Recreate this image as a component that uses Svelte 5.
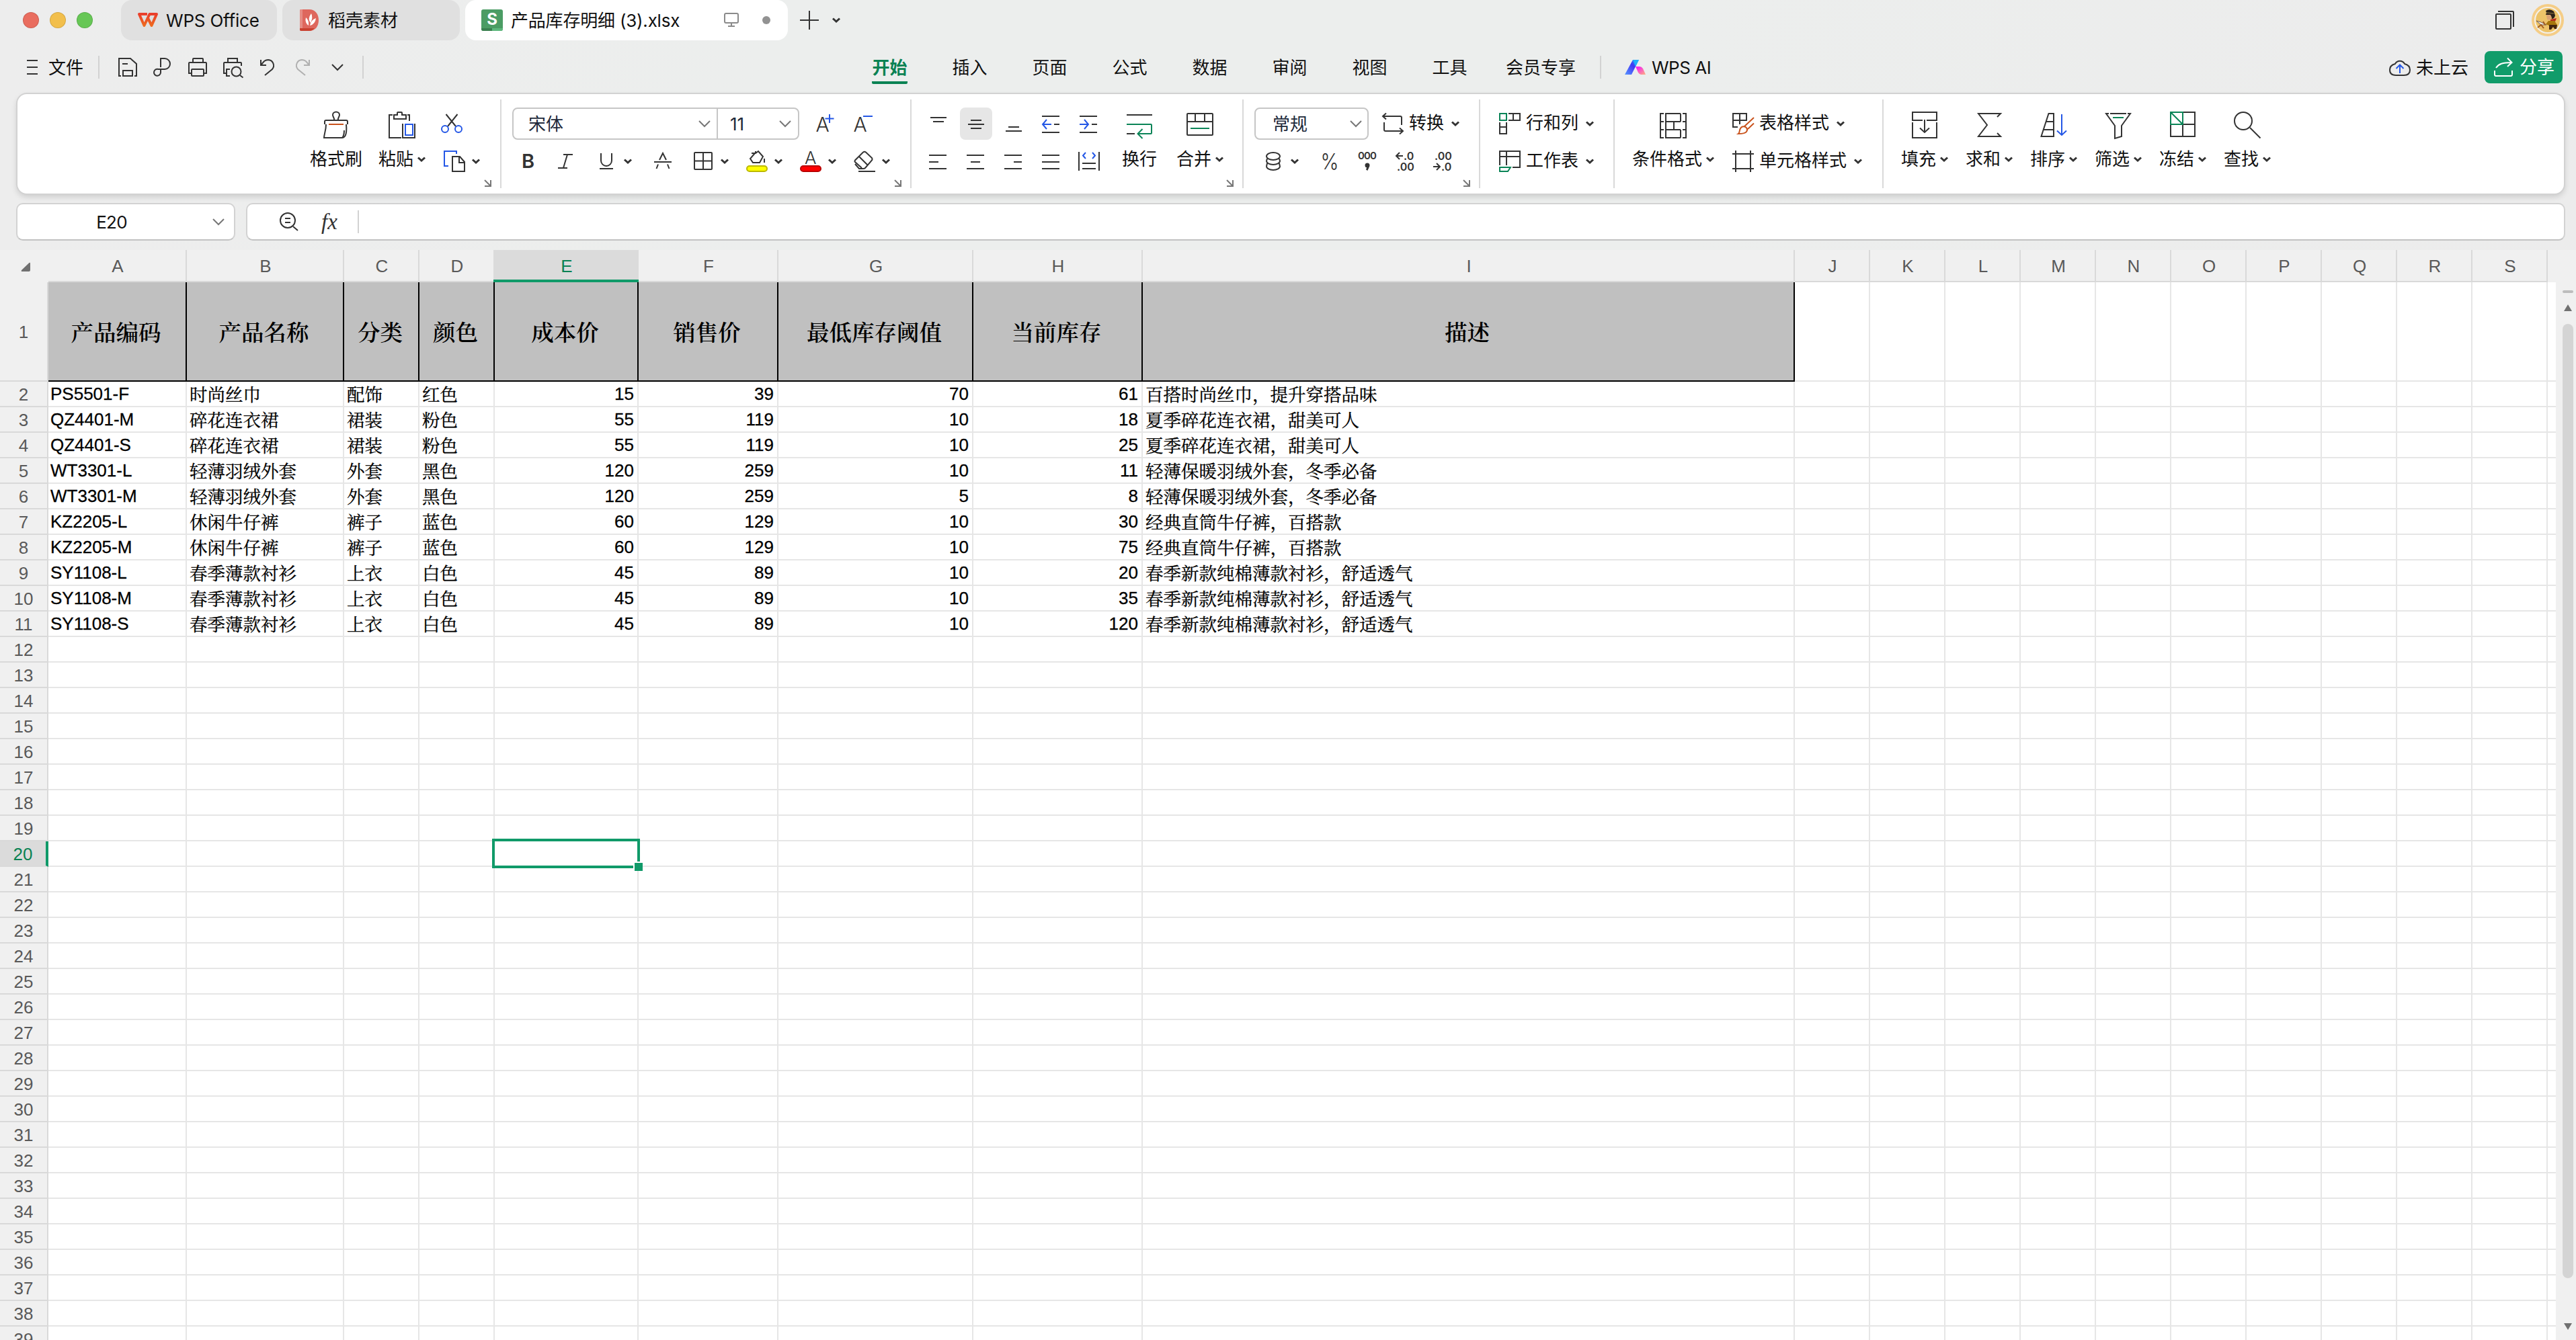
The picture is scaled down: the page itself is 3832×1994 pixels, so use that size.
<script lang="ts">
    type Item = { icon: string; label: string; drop?: boolean };

    const menus = ['开始', '插入', '页面', '公式', '数据', '审阅', '视图', '工具', '会员专享'];
    let activeMenu = $state('开始');

    const columns = [
        { id: 'A', width: 206 },
        { id: 'B', width: 234 },
        { id: 'C', width: 112 },
        { id: 'D', width: 112 },
        { id: 'E', width: 214 },
        { id: 'F', width: 208 },
        { id: 'G', width: 290 },
        { id: 'H', width: 252 },
        { id: 'I', width: 970 },
        ...'JKLMNOPQRS'.split('').map((id) => ({ id, width: 112 }))
    ];

    const header = ['产品编码', '产品名称', '分类', '颜色', '成本价', '销售价', '最低库存阈值', '当前库存', '描述'];

    const records: (string | number)[][] = [
        ['PS5501-F', '时尚丝巾', '配饰', '红色', 15, 39, 70, 61, '百搭时尚丝巾，提升穿搭品味'],
        ['QZ4401-M', '碎花连衣裙', '裙装', '粉色', 55, 119, 10, 18, '夏季碎花连衣裙，甜美可人'],
        ['QZ4401-S', '碎花连衣裙', '裙装', '粉色', 55, 119, 10, 25, '夏季碎花连衣裙，甜美可人'],
        ['WT3301-L', '轻薄羽绒外套', '外套', '黑色', 120, 259, 10, 11, '轻薄保暖羽绒外套，冬季必备'],
        ['WT3301-M', '轻薄羽绒外套', '外套', '黑色', 120, 259, 5, 8, '轻薄保暖羽绒外套，冬季必备'],
        ['KZ2205-L', '休闲牛仔裤', '裤子', '蓝色', 60, 129, 10, 30, '经典直筒牛仔裤，百搭款'],
        ['KZ2205-M', '休闲牛仔裤', '裤子', '蓝色', 60, 129, 10, 75, '经典直筒牛仔裤，百搭款'],
        ['SY1108-L', '春季薄款衬衫', '上衣', '白色', 45, 89, 10, 20, '春季新款纯棉薄款衬衫，舒适透气'],
        ['SY1108-M', '春季薄款衬衫', '上衣', '白色', 45, 89, 10, 35, '春季新款纯棉薄款衬衫，舒适透气'],
        ['SY1108-S', '春季薄款衬衫', '上衣', '白色', 45, 89, 10, 120, '春季新款纯棉薄款衬衫，舒适透气']
    ];

    const rowNumbers = Array.from({ length: 39 }, (_, i) => i + 1);
    let selected = $state({ col: 4, row: 20 });
    let cellName = $derived(columns[selected.col].id + selected.row);

    const BLUE = '#2457e6';
    const GREEN = '#0b8457';
    const ORANGE = '#c9531d';

    // 32x32 unless the name is listed in bigIcons (40x40)
    const icons: Record<string, string> = {
        save: '<path d="M6 29H3V3H20L29 11V29H26M9 29V21H23V29ZM8 11H16"/>',
        link: '<path d="M13 16V3H19A8 8 0 0 1 19 19H9.500A5 5 0 1 0 13 24V19"/>',
        print: '<path d="M9 9V4Q9 3 10 3H23Q24 3 24 4V9M6 25H3V10Q3 9 4 9H28Q29 9 29 10V25H26"/><rect x="7" y="19" width="18" height="10" rx="1"/>',
        preview: '<path d="M9 9V3H23V9M6 25H3V10Q3 9 4 9H28Q29 9 29 10V14M12 19H7V29H12M27 28L31.500 31.500"/><circle cx="21.500" cy="22.500" r="7"/>',
        undo: '<path d="M6 5V13H14M7 12C10 8 12 5 17 5A8.500 8.500 0 0 1 23 19L12 28"/>',
        redo: '<path d="M26 5V13H18M25 12C22 8 20 5 15 5A8.500 8.500 0 0 0 9 19L20 28"/>',
        brush: `<path d="M17 13C18 10 15 8 15 5A5 4.500 0 0 1 25 5C25 8 22 10 23 13M3 19V15Q3 13 5 13H35Q37 13 37 15V19M5 19C5 28 2 34 2 39H29C35 39 36 30 35 19M29 39C32 36 32 32 32 28"/><path d="M9 19H31" stroke="${ORANGE}"/>`,
        paste: `<path d="M6 5H1V39H19M28 5H31V14M8 11V5H13V2Q13 1 14 1H19Q20 1 20 2V5H26V11ZM21 18V39H39V18"/><rect x="25" y="19" width="11" height="16" stroke="${BLUE}"/>`,
        cut: `<path d="M7.500 2L22 20M24.500 2L10 20"/><g stroke="${BLUE}"><circle cx="6" cy="24" r="5"/><circle cx="26" cy="24" r="5"/></g>`,
        copy: `<path d="M7 23H1V1H19V5" stroke="${BLUE}"/><path d="M13 9H24L31 17V31H13ZM23 9V18H31"/>`,
        grow: `<text x="1.500" y="28" font-size="30" font-weight="300" textLength="19">A</text><path d="M22 2V15M15.500 8.500H28.500" stroke="${BLUE}"/>`,
        shrink: `<text x="1.500" y="28" font-size="30" font-weight="300" textLength="19">A</text><path d="M16 5H30" stroke="${BLUE}"/>`,
        bold: '<text x="6" y="25.500" font-size="29" font-weight="600">B</text>',
        italic: '<path d="M12 6H26M4 26H18M18 6L12 26"/>',
        underline: '<path d="M8 4V15A8 8 0 0 0 24 15V4M6 27H26"/>',
        strike: '<path d="M3 17H29M11 14L16 4L21 14M6.500 27L9 20.500M25.500 27L23 20.500"/>',
        border: '<rect x="3" y="3" width="26" height="25" rx="1"/><path d="M3 15.500H29M16 3V28"/>',
        fill: '<path d="M8 4H14L18 1L25 9L20 18H10L6 12L13 4M14 1V4M27 12V18"/><rect x="1" y="23" width="30" height="8" rx="4" fill="#ff0" stroke="#bcb800"/>',
        color: '<text x="7" y="20" font-size="26" font-weight="300">A</text><rect x="1" y="23" width="30" height="8" rx="4" fill="#f00" stroke="#b80000"/>',
        eraser: '<path d="M12 26L2 17Q1 16 2 14.500L14 2.500Q16 1 18 2.500L27 11Q28 13 27 14.500L17 26Q16 27 14 27H8L2 20M8 9L21 22M7 31H32"/>',
        top: '<path d="M4 7H28M8 13H24"/>',
        middle: '<path d="M8 11H24M4 17H28M8 23H24"/>',
        bottom: '<path d="M8 21H24M4 27H28"/>',
        outdent: `<path d="M2 5H28M20 17H28M2 29H28"/><path d="M16 17H3M9 10L3 17L9 24" stroke="${BLUE}"/>`,
        indent: `<path d="M2 5H28M20 17H28M2 29H28"/><path d="M2 17H15M9 10L15 17L9 24" stroke="${BLUE}"/>`,
        left: '<path d="M2 7H28M2 17H16M2 27H28"/>',
        center: '<path d="M2 7H28M8 17H22M2 27H28"/>',
        right: '<path d="M2 7H28M16 17H28M2 27H28"/>',
        justify: '<path d="M2 7H28M2 17H28M2 27H28"/>',
        spread: `<path d="M1 2V30M31 2V30M6 19H26M6 27H26"/><path d="M11 3L7 7.500L11 12M21 3L25 7.500L21 12" stroke="${BLUE}"/>`,
        wrap: `<path d="M1 5H39M1 33H13"/><path d="M1 19H37Q38 19 38 20V32Q38 33 37 33H18M24.500 26L17.500 33L24.500 40" stroke="${GREEN}"/>`,
        merge: `<rect x="1" y="3" width="38" height="32" rx="1"/><path d="M1 15H39M13 3V15M27 3V15"/><path d="M6 25H34" stroke="${GREEN}"/>`,
        convert: '<path d="M1 5H27Q29 5 29 7V18M6 .5L1 5L6 9.500M3 14V25Q3 27 5 27H31M26 22.500L31 27L26 31.500"/>',
        coins: '<ellipse cx="16" cy="8.500" rx="10" ry="5.500"/><path d="M6 15.500A10 5.500 0 0 0 26 15.500L25 12M6 15.500L7 12M6 23.500A10 5.500 0 0 0 26 23.500L25 19M6 23.500L7 19"/>',
        percent: '<text x="2.500" y="28" font-size="33" font-weight="300" textLength="27" lengthAdjust="spacingAndGlyphs">%</text>',
        thousands: '<text x="2" y="13" font-size="15" font-weight="600" textLength="28">000</text><path d="M17 21Q18 25 15 29" stroke-width="3"/><circle cx="16" cy="22" r="2.500" fill="#333"/>',
        lessDigits: '<path d="M13 8H3M8 3L3 8L8 13"/><text x="14" y="13.500" font-size="16" font-weight="600">.0</text><text x="4" y="30" font-size="16" font-weight="600">.00</text>',
        moreDigits: '<path d="M2 24H12M7 19L12 24L7 29"/><text x="4" y="13.500" font-size="16" font-weight="600">.00</text><text x="14" y="30" font-size="16" font-weight="600">.0</text>',
        rowscols: `<rect x="1" y="1" width="10" height="10" stroke="${GREEN}"/><path d="M14 1H31V11H14M21 1V11M1 14V31H11V14M1 21H11"/>`,
        sheet: `<path d="M1 22V1H31V25H20M1 9H31M11 1V22"/><path d="M1 25H17L13 31H1Z" stroke="${GREEN}"/>`,
        condition: '<path d="M6 3H1V39H6M1 15H6M1 27H6M34 3H39V39H34M39 15H34M39 27H34M31 15V4Q31 3 30 3H9V39H30Q31 39 31 38V27M9 15H31M9 27H31M21 15V27"/>',
        tablestyle: `<path d="M21 12V1H1V21H8M1 11H21M11 1V17"/><path d="M32 7L18 20M32 15.500L23 24M9 31C12 29 9 23 15 20.500C20 19 24 24 21 28C19 31 14 31 9 31Z" stroke="${ORANGE}"/>`,
        cellstyle: '<path d="M0 5H32M0 27H32M5 0V32M27 0V32"/>',
        fillin: '<path d="M17 13H2V1H38V13H23M2 16V39H38V16M20 12V31M13 24.500L20 31L27 24.500"/>',
        sum: '<path d="M32 8L37 3H4L17 20L4 37H37L32 32"/>',
        sort: `<path d="M1.500 37L12.500 3H20V37ZM9 15H20M5 27H20"/><path d="M32 4V35M25 28.500L32 35L39 28.500" stroke="${BLUE}"/>`,
        filter: `<path d="M6 3H2L15 21V40L25 37V21L38 3H34M8 3H32"/><path d="M12 9H28" stroke="${GREEN}"/>`,
        freeze: `<path d="M20 1H38V37H2V19M20 19V37M20 19H38"/><path d="M2 1H20V19H2ZM2 1L20 19" stroke="${GREEN}"/>`,
        find: '<circle cx="14" cy="14" r="13"/><path d="M24 24L39.500 39.500"/>',
        zoom: '<circle cx="14" cy="14" r="11"/><path d="M22 23L29 29M10 11H18M10 17H18"/>',
        cloud: `<path d="M9 10A8 8 0 0 1 23 10Q31 12 31 19Q31 27 22 27H10Q1 27 1 19Q1 12 9 10Z"/><path d="M16 24V12M10.500 17L16 11.500L21.500 17" stroke="${BLUE}"/>`,
        windows: '<path d="M6 3H28Q29 3 29 4V26M3 8Q3 7 4 7H24Q25 7 25 8V28Q25 29 24 29H4Q3 29 3 28Z"/>',
        share: '<path d="M5 17C9 11 15 9 28 9M22 2.500L28.500 9L22 15M3 21V27Q3 29 5 29H27Q29 29 29 27V21"/>',
        screen: '<rect x="4" y="5" width="20" height="14" rx="2"/><path d="M14 19V23M9 24H19"/>'
    };

    const bigIcons = ['brush', 'paste', 'wrap', 'merge', 'condition', 'fillin', 'sum', 'sort', 'filter', 'freeze', 'find'];

    const quickTools = ['save', 'link', 'print', 'preview', 'undo', 'redo'];
    const alignTools = [
        ['top', 'middle', 'bottom', 'outdent', 'indent'],
        ['left', 'center', 'right', 'justify', 'spread']
    ];
    const editTools: Item[] = [
        { icon: 'fillin', label: '填充', drop: true },
        { icon: 'sum', label: '求和', drop: true },
        { icon: 'sort', label: '排序', drop: true },
        { icon: 'filter', label: '筛选', drop: true },
        { icon: 'freeze', label: '冻结', drop: true },
        { icon: 'find', label: '查找', drop: true }
    ];

    function cellText(row: number, col: number) {
        if (row === 1) return header[col] ?? '';
        return records[row - 2]?.[col] ?? '';
    }
</script>

{#snippet icon(name: string)}
    {@const size = bigIcons.includes(name) ? 40 : 32}
    <svg class="icon" width={size} height={size} viewBox="0 0 {size} {size}">{@html icons[name]}</svg>
{/snippet}

{#snippet caret()}
    <svg class="caret" width="12" height="8" viewBox="0 0 12 8"><path d="M1 1.500L6 6L11 1.500" /></svg>
{/snippet}

{#snippet arrow()}
    <svg class="arrow" width="18" height="10" viewBox="0 0 18 10"><path d="M1 1L9 9L17 1" /></svg>
{/snippet}

{#snippet slot(name: string)}
    <button class="slot" class:on={name === 'middle'}>{@render icon(name)}</button>
{/snippet}

{#snippet drop(name: string)}
    <button class="slot drop">{@render icon(name)}{@render caret()}</button>
{/snippet}

{#snippet big(item: Item)}
    <button class="big">
        {@render icon(item.icon)}
        <span class="label">{item.label}{#if item.drop}{@render caret()}{/if}</span>
    </button>
{/snippet}

{#snippet wide(item: Item)}
    <button class="wide">
        {@render icon(item.icon)}<span class="text">{item.label}</span>{@render caret()}
    </button>
{/snippet}

{#snippet launcher()}
    <svg class="launcher" width="11" height="11" viewBox="0 0 11 11"><path d="M1 1L9 9M10 1V10H1" /></svg>
{/snippet}

<div class="app">
    <header class="titlebar">
        <div class="lights"><i class="red"></i><i class="yellow"></i><i class="green"></i></div>
        <div class="tab home">
            <svg width="32" height="24" viewBox="0 0 32 24">
                <defs>
                    <linearGradient id="wps" x1="0" y1="0" x2="0" y2="1"><stop offset="0" stop-color="#ea3f2c" /><stop offset="1" stop-color="#ee6a1f" /></linearGradient>
                </defs>
                <path d="M15 3H3L10.500 20L18.500 3H29L21.500 20L16 9" fill="none" stroke="url(#wps)" stroke-width="4" stroke-linejoin="round" />
            </svg>
            <span>WPS Office</span>
        </div>
        <div class="tab docer">
            <svg width="28" height="32" viewBox="0 0 28 32">
                <path d="M2 0H14C23 0 28 7 28 16S23 32 14 32H2Q0 32 0 30V2Q0 0 2 0Z" fill="#de675d" />
                <path d="M0 2Q0 0 2 0H4V28H0Z" fill="#e68c84" />
                <path d="M0 28H22Q18 32 14 32H2Q0 32 0 30Z" fill="#c9402f" />
                <path d="M17 6Q11 14 16 20Q20 12 17 6ZM9 12Q7 20 13 24Q14 16 9 12ZM24 13Q16 16 15 24Q23 22 24 13Z" fill="#fff" />
            </svg>
            <span>稻壳素材</span>
        </div>
        <div class="tab file">
            <svg width="32" height="32" viewBox="0 0 32 32">
                <rect width="32" height="32" rx="3" fill="#4b9c64" />
                <path d="M0 28H16V32H3Q0 32 0 29Z" fill="#3a8050" />
                <path d="M16 28H32V29Q32 32 29 32H16Z" fill="#5db77c" />
                <text x="16" y="22.500" text-anchor="middle" class="sheet-letter">S</text>
            </svg>
            <span class="filename">产品库存明细 (3).xlsx</span>
            <span class="screen">{@render icon('screen')}</span>
            <i class="unsaved"></i>
        </div>
        <svg class="plus" width="28" height="28" viewBox="0 0 28 28"><path d="M14 0V28M0 14H28" /></svg>
        {@render caret()}
        <div class="window-tools">
            {@render icon('windows')}
            <svg class="avatar" width="48" height="48" viewBox="0 0 48 48">
                <circle cx="24" cy="24" r="24" fill="#f5cd86" />
                <circle cx="24" cy="24" r="19" fill="#edc369" stroke="#f4f1ea" stroke-width="2" />
                <path d="M21 10Q27 6 33 11L35 17Q34 22 30 22L28 17L21 16L22 13Z" fill="#2c2118" />
                <path d="M22 16H28L30 20L27 24L23 23Z" fill="#dba374" />
                <path d="M22 13L33 14" stroke="#78643a" stroke-width="1.500" />
                <path d="M28 23L37 21L35 26L28 26Z" fill="#b52a20" />
                <path d="M25 25L34 25L38 31L26 32L21 30Z" fill="#a8770d" />
                <path d="M26 31H38L37 37H34L32 34L29 38H26Z" fill="#42240f" />
                <path d="M7 25L14 27L22 31L14 31Z" fill="#f1eee9" stroke="#77604c" />
                <path d="M9 35L14 31L18 36M17 26L20 31" stroke="#a05b22" stroke-width="2" fill="none" />
            </svg>
        </div>
    </header>

    <nav class="menubar">
        <div class="quick">
            <svg class="burger" width="16" height="24" viewBox="0 0 16 24"><path d="M0 2H16M0 12H16M0 22H16" /></svg>
            <span class="file-menu">文件</span>
            <i class="rule"></i>
            {#each quickTools as tool}
                <button class="quick-btn" class:faded={tool === 'redo'}>{@render icon(tool)}</button>
            {/each}
            <span class="more">{@render arrow()}</span>
            <i class="rule"></i>
        </div>
        {#each menus as menu}
            <button class="menu" class:long={menu.length > 2} class:active={menu === activeMenu} onclick={() => (activeMenu = menu)}>
                <span>{menu}</span>
            </button>
        {/each}
        <i class="rule"></i>
        <div class="ai">
            <svg width="32" height="22" viewBox="0 0 32 22">
                <defs>
                    <linearGradient id="ai1" x1="0" y1="1" x2="1" y2="0"><stop offset="0" stop-color="#5797ff" /><stop offset=".6" stop-color="#4036f5" /><stop offset="1" stop-color="#25c3ff" /></linearGradient>
                    <linearGradient id="ai2" x1="0" y1="0" x2="1" y2="1"><stop offset=".2" stop-color="#f62bea" /><stop offset="1" stop-color="#ffb37c" /></linearGradient>
                </defs>
                <path d="M12 0H21L10 22H0Z" fill="url(#ai1)" />
                <path d="M12 0H21L16 10Z" fill="#1eb0fa" />
                <path d="M16 10H22Q25 10 27 13L31 22H24Q22 22 20 19Z" fill="url(#ai2)" />
            </svg>
            <span>WPS AI</span>
        </div>
        <div class="cloud">{@render icon('cloud')}<span>未上云</span></div>
        <button class="share">{@render icon('share')}<span>分享</span></button>
    </nav>

    <section class="ribbon">
        <div class="group clipboard">
            {@render big({ icon: 'brush', label: '格式刷' })}
            {@render big({ icon: 'paste', label: '粘贴', drop: true })}
            <div class="rows">
                <div class="row">{@render slot('cut')}</div>
                <div class="row">{@render drop('copy')}</div>
            </div>
            {@render launcher()}
        </div>
        <div class="group font">
            <div class="rows">
                <div class="row">
                    <div class="combo pair">
                        <div class="family"><span>宋体</span>{@render arrow()}</div>
                        <div class="size"><span>11</span>{@render arrow()}</div>
                    </div>
                    {@render slot('grow')}
                    {@render slot('shrink')}
                </div>
                <div class="row">
                    {@render slot('bold')}
                    {@render slot('italic')}
                    {@render drop('underline')}
                    {@render slot('strike')}
                    <div class="joined">
                        {@render drop('border')}
                        {@render drop('fill')}
                        {@render drop('color')}
                        {@render drop('eraser')}
                    </div>
                </div>
            </div>
            {@render launcher()}
        </div>
        <div class="group align">
            <div class="rows">
                {#each alignTools as tools}
                    <div class="row">
                        {#each tools as tool}{@render slot(tool)}{/each}
                    </div>
                {/each}
            </div>
            {@render big({ icon: 'wrap', label: '换行' })}
            {@render big({ icon: 'merge', label: '合并', drop: true })}
            {@render launcher()}
        </div>
        <div class="group number">
            <div class="rows">
                <div class="row">
                    <div class="combo format"><span>常规</span>{@render arrow()}</div>
                    {@render wide({ icon: 'convert', label: '转换' })}
                </div>
                <div class="row">
                    {@render drop('coins')}
                    {@render slot('percent')}
                    {@render slot('thousands')}
                    {@render slot('lessDigits')}
                    {@render slot('moreDigits')}
                </div>
            </div>
            {@render launcher()}
        </div>
        <div class="group cells">
            <div class="rows">
                <div class="row">{@render wide({ icon: 'rowscols', label: '行和列' })}</div>
                <div class="row">{@render wide({ icon: 'sheet', label: '工作表' })}</div>
            </div>
        </div>
        <div class="group styles">
            {@render big({ icon: 'condition', label: '条件格式', drop: true })}
            <div class="rows">
                <div class="row">{@render wide({ icon: 'tablestyle', label: '表格样式' })}</div>
                <div class="row">{@render wide({ icon: 'cellstyle', label: '单元格样式' })}</div>
            </div>
        </div>
        <div class="group edit">
            {#each editTools as tool}{@render big(tool)}{/each}
        </div>
    </section>

    <section class="formula">
        <div class="name-box"><span>{cellName}</span>{@render arrow()}</div>
        <div class="input">
            {@render icon('zoom')}
            <span class="fx">fx</span>
            <i class="rule"></i>
        </div>
    </section>

    <main class="sheet">
        <div class="grid">
            <div class="heads">
                <div class="corner"><svg width="14" height="14" viewBox="0 0 14 14"><path d="M14 2Q14 0 12 1.500L1 12Q0 14 2 14H12Q14 14 14 12Z" /></svg></div>
                {#each columns as col, i}
                    <div class="head" class:current={i === selected.col} style="width: {col.width}px">{col.id}</div>
                {/each}
            </div>
            {#each rowNumbers as row}
                <div class="line" class:title={row === 1}>
                    <div class="num" class:current={row === selected.row}>{row}</div>
                    {#each columns as col, i}
                        {@const text = cellText(row, i)}
                        <!-- svelte-ignore a11y_click_events_have_key_events, a11y_no_static_element_interactions -->
                        <div
                            class="cell"
                            class:named={row === 1 && i < header.length}
                            class:numeric={typeof text === 'number'}
                            class:cjk={i !== 0 && typeof text === 'string'}
                            style="width: {col.width}px"
                            onclick={() => (selected = { col: i, row })}
                        >
                            {text}
                            {#if i === selected.col && row === selected.row}
                                <span class="selection"><i></i></span>
                            {/if}
                        </div>
                    {/each}
                    <div class="rest"></div>
                </div>
            {/each}
        </div>
        <div class="scroll">
            <i class="split"></i>
            <svg width="12" height="10" viewBox="0 0 12 10"><path d="M6 0L12 10H0Z" /></svg>
            <i class="thumb"></i>
            <svg width="12" height="10" viewBox="0 0 12 10"><path d="M0 0H12L6 10Z" /></svg>
        </div>
    </main>
</div>

<style>
:global(body) {
    margin: 0;
    background: #ededed;
}

.app {
    display: flex;
    flex-direction: column;
    width: 3832px;
    height: 1994px;
    overflow: hidden;
    background: linear-gradient(90deg, #ededed, #eceeed 30%, #eceeed 65%, #ececec);
    color: #111;
    font-family: Inter, "Noto Sans CJK SC", sans-serif;
    font-size: 26px;
    line-height: 40px;
    white-space: nowrap;
}

button {
    display: flex;
    padding: 0;
    border: none;
    background: none;
    color: inherit;
    font: inherit;
}

svg {
    display: block;
    flex: none;
}

.icon,
.caret,
.arrow,
.launcher,
.plus,
.burger {
    fill: none;
    stroke: #333;
    stroke-width: 2;
    overflow: visible;
}

.icon :global(text) {
    fill: #333;
    stroke: none;
}

.caret {
    stroke-width: 3;
}

.arrow {
    stroke: #777;
}

.rule {
    width: 2px;
    height: 34px;
    background: #d2d2d2;
}

/* title bar */
.titlebar {
    display: flex;
    align-items: center;
    height: 60px;
}

.lights {
    display: flex;
    gap: 16px;
    width: 146px;
    padding-left: 34px;
}

.lights i {
    box-sizing: border-box;
    width: 24px;
    height: 24px;
    border-radius: 50%;
    border: 1px solid rgba(0, 0, 0, 0.12);
}

.red {
    background: #e96d5f;
}

.yellow {
    background: #f2bf4c;
}

.green {
    background: #67c756;
}

.tab {
    box-sizing: border-box;
    display: flex;
    align-items: center;
    height: 60px;
    border-radius: 16px;
    background: #e0e0e0;
}

.tab > span {
    padding-top: 2px;
}

.home {
    width: 232px;
    gap: 11px;
    padding-left: 24px;
    letter-spacing: -0.2px;
}

.docer {
    width: 264px;
    margin: 0 8px;
    padding-left: 26px;
    gap: 14px;
}

.file {
    width: 480px;
    padding-left: 24px;
    gap: 12px;
    background: #fff;
}

.sheet-letter {
    font-size: 24px;
    font-weight: 700;
    fill: #fff;
}

.filename {
    width: 302px;
    letter-spacing: -0.2px;
}

.screen .icon {
    stroke: #8a8a8a;
}

.unsaved {
    width: 12px;
    height: 12px;
    margin-left: 16px;
    border-radius: 50%;
    background: #929292;
}

.plus {
    margin: 0 20px 0 18px;
}

.window-tools {
    display: flex;
    align-items: center;
    gap: 24px;
    margin-left: auto;
    margin-right: 18px;
}

/* menu bar */
.menubar {
    display: flex;
    align-items: center;
    height: 80px;
}

.quick {
    box-sizing: border-box;
    display: flex;
    align-items: center;
    width: 1264px;
    padding-left: 40px;
}

.file-menu {
    width: 74px;
    margin-left: 16px;
    padding-top: 2px;
}

.quick .rule + .quick-btn {
    margin-left: 26px;
}

.quick-btn {
    margin-right: 20px;
}

.faded .icon {
    stroke: #b0b0b0;
}

.more {
    margin: 0 28px 0 7px;
}

.more .arrow {
    stroke: #333;
}

.menu {
    justify-content: center;
    width: 119px;
}

.menu.long {
    width: 152px;
    margin-right: 12px;
}

.menu span {
    padding-top: 5px;
    border-bottom: 4px solid transparent;
    border-radius: 2px;
}

.menu.active {
    color: #0a8253;
    font-weight: 600;
}

.menu.active span {
    border-color: #0a8253;
}

.ai {
    display: flex;
    align-items: center;
    gap: 8px;
    margin-left: 35px;
    letter-spacing: -0.5px;
}

.ai span,
.cloud span {
    padding-top: 1px;
}

.cloud {
    display: flex;
    align-items: center;
    gap: 8px;
    margin-left: auto;
}

.cloud .icon {
    margin-top: 2px;
}

.share {
    box-sizing: border-box;
    align-items: center;
    gap: 8px;
    width: 116px;
    height: 48px;
    margin: 0 20px 0 24px;
    padding-left: 12px;
    border-radius: 8px;
    background: #119c6a;
    color: #fff;
}

.share .icon {
    stroke: #fff;
}

/* ribbon */
.ribbon {
    display: flex;
    height: 148px;
    margin: 0 18px 14px 26px;
    border-radius: 14px;
    background: #fff;
    box-shadow: 0 0 0 2px #d2d2d2, 0 4px 8px 1px rgba(0, 0, 0, 0.14);
}

.group {
    position: relative;
    box-sizing: border-box;
    display: flex;
    flex: none;
    align-items: flex-start;
    height: 132px;
    margin-top: 8px;
    border-right: 2px solid #d9d9d9;
}

.launcher {
    position: absolute;
    right: 13px;
    bottom: 2px;
    stroke: #777;
}

.rows {
    display: flex;
    flex-direction: column;
    gap: 8px;
    padding-top: 12px;
}

.row {
    display: flex;
    align-items: center;
    gap: 8px;
    height: 48px;
}

.joined {
    display: flex;
}

.slot {
    box-sizing: border-box;
    align-items: center;
    width: 48px;
    height: 48px;
    padding-left: 8px;
    border-radius: 8px;
}

.slot.on {
    background: #e6e6e6;
}

.slot.drop {
    gap: 10px;
    width: 80px;
    padding-left: 12px;
}

.big {
    flex-direction: column;
    align-items: center;
    gap: 11px;
    width: 96px;
    padding-top: 18px;
}

.label {
    display: flex;
    align-items: center;
    gap: 6px;
}

.wide {
    align-items: center;
    gap: 8px;
}

.wide .caret {
    margin-left: 3px;
}

.wide .text {
    margin-top: -2px;
}

.combo {
    box-sizing: border-box;
    display: flex;
    align-items: center;
    height: 48px;
    border: 2px solid #c6c6c6;
    border-radius: 8px;
    color: #20293a;
}

.combo span {
    padding-top: 1px;
}

.clipboard {
    width: 720px;
    padding-left: 426px;
}

.clipboard .big {
    margin-right: 2px;
}

.font {
    width: 610px;
    padding-left: 16px;
}

.pair {
    width: 427px;
    margin-right: 7px;
}

.family,
.size {
    box-sizing: border-box;
    display: flex;
    align-items: center;
    justify-content: space-between;
    height: 44px;
}

.family {
    width: 304px;
    padding: 0 9px 0 22px;
    border-right: 2px solid #c6c6c6;
}

.size {
    width: 119px;
    padding: 0 10px 0 18px;
}

.align {
    width: 494px;
    padding-left: 16px;
}

.align .big {
    width: 80px;
    margin-left: 11px;
}

.align .big + .big {
    width: 92px;
    margin-left: 4px;
}

.number {
    width: 352px;
    padding-left: 16px;
}

.format {
    justify-content: space-between;
    width: 170px;
    margin-right: 12px;
    padding: 0 8px 0 25px;
}

.cells {
    width: 200px;
    padding-left: 28px;
}

.styles {
    width: 400px;
    padding-left: 15px;
}

.styles .big {
    width: 144px;
    margin-right: 16px;
}

.edit {
    padding-left: 13px;
    border-right: none;
}

/* formula bar */
.formula {
    display: flex;
    gap: 16px;
    margin: 0 16px 14px 24px;
}

.name-box,
.input {
    box-sizing: border-box;
    display: flex;
    align-items: center;
    height: 56px;
    border: 2px solid #d2d2d2;
    border-bottom-color: #c2c2c2;
    border-radius: 10px;
    background: #fff;
}

.name-box {
    width: 326px;
    padding-right: 14px;
    letter-spacing: -0.8px;
}

.name-box span {
    flex: 1;
    padding: 2px 10px 0 0;
    text-align: center;
}

.input {
    flex: 1;
    padding-left: 46px;
}

.fx {
    width: 54px;
    margin-left: 32px;
    font: italic 33px/40px "Liberation Serif", serif;
    color: #333;
}

/* sheet */
.sheet {
    display: flex;
    flex: 1;
    background: #f0f0f0;
    font-family: "Liberation Sans", "Noto Sans CJK SC", sans-serif;
}

.grid {
    width: 3806px;
    height: 1622px;
    overflow: hidden;
}

.heads {
    display: flex;
    width: 3832px;
    height: 48px;
}

.corner {
    box-sizing: border-box;
    width: 72px;
    height: 48px;
    padding: 18px 0 0 31px;
}

.corner path,
.scroll path {
    fill: #707070;
}

.head {
    box-sizing: border-box;
    height: 48px;
    padding: 4px 0 0 2px;
    border-right: 2px solid #d9d9d9;
    border-bottom: 2px solid #d9d9d9;
    color: #595959;
    text-align: center;
}

.head.current {
    margin-left: -2px;
    padding-left: 2px;
    box-sizing: content-box;
    height: 40px;
    border-right: none;
    border-bottom: 4px solid #109a69;
    background: #dbdbdb;
    color: #0a8253;
}

.line {
    display: flex;
    height: 38px;
    line-height: 36px;
}

.line.title {
    height: 148px;
    line-height: 146px;
}

.num {
    box-sizing: border-box;
    flex: none;
    width: 72px;
    border-right: 2px solid #d9d9d9;
    border-bottom: 2px solid #d9d9d9;
    padding-top: 1px;
    background: #f0f0f0;
    color: #595959;
    text-align: center;
}

.num.current {
    border-right: 4px solid #109a69;
    background: #dbdbdb;
    color: #0a8253;
}

.cell {
    position: relative;
    box-sizing: border-box;
    flex: none;
    padding: 0 6px 0 3px;
    border-right: 2px solid #e6e6e6;
    border-bottom: 2px solid #e6e6e6;
    background: #fff;
    color: #000;
    -webkit-text-stroke: 0.3px #000;
}

.cell.cjk {
    padding-left: 4px;
    font-family: "Songti SC", SimSun, "Noto Serif CJK SC", "Noto Sans CJK SC", serif;
    font-size: 26.500px;
}

.cell.numeric {
    padding-right: 5px;
    text-align: right;
}

.cell.named {
    padding: 0 3px 0 0;
    border-color: #000;
    background: #c0c0c0;
    font-family: "Songti SC", SimSun, "Noto Serif CJK SC", "Noto Sans CJK SC", serif;
    font-size: 33.500px;
    font-weight: 600;
    text-align: center;
    -webkit-text-stroke: 0;
}

.rest {
    box-sizing: border-box;
    width: 16px;
    border-bottom: 2px solid #e6e6e6;
    background: #fff;
}

.selection {
    position: absolute;
    z-index: 1;
    inset: -4px -4px -4px -4px;
    border: 4px solid #109a69;
}

.selection i {
    position: absolute;
    right: -8px;
    bottom: -8px;
    width: 12px;
    height: 12px;
    background: #109a69;
    box-shadow: -2px -2px 0 #fff, -2px 0 0 #fff, 0 -2px 0 #fff;
}

.scroll {
    display: flex;
    flex-direction: column;
    align-items: center;
    width: 24px;
    margin-top: 60px;
    padding-left: 6px;
}

.split {
    width: 16px;
    height: 4px;
    margin-bottom: 17px;
    border-radius: 2px;
    background: #bdbdbd;
}

.thumb {
    width: 16px;
    height: 1420px;
    margin: 19px 0 67px;
    border-radius: 8px;
    background: #d4d4d4;
}
</style>
